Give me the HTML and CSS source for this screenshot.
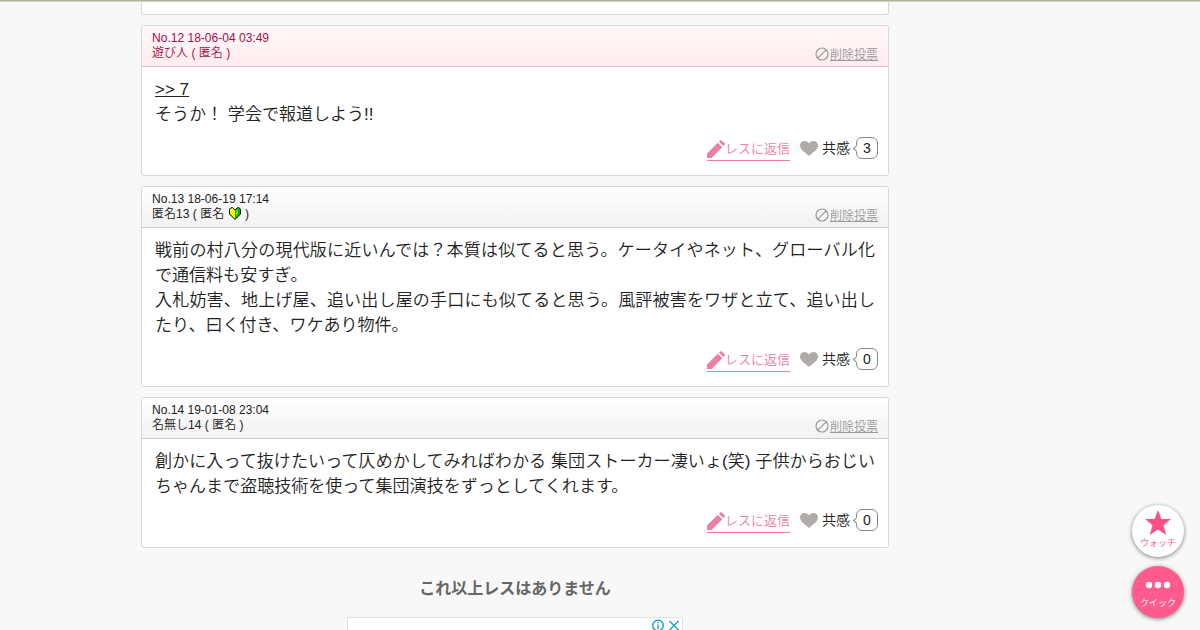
FILE: index.html
```html
<!DOCTYPE html>
<html lang="ja">
<head>
<meta charset="utf-8">
<title>スレッド</title>
<link rel="stylesheet" href="styles.css">
</head>
<body>
<svg class="defs" width="0" height="0" aria-hidden="true">
  <symbol id="ban" viewBox="0 0 14 14"><circle cx="7" cy="7" r="6" fill="none" stroke="currentColor" stroke-width="1.2"/><path d="M2.8 11.2 11.2 2.8" stroke="currentColor" stroke-width="1.2"/></symbol>
  <symbol id="pencil" viewBox="0 0 18 18"><path d="M0 18V13.5L10.800 2.700l4.500 4.500L4.500 18zM12 1.700 13.300.400q.7-.6 1.400 0l2.900 2.900q.6.7 0 1.400l-1.300 1.300z" fill="currentColor"/></symbol>
  <symbol id="heart" viewBox="0 0 18 15"><path d="M9 15C7.5 13.2 0 9.4 0 4.6 0 2 2 .1 4.5.1 6.5.1 8.2 1.2 9 2.5 9.800 1.200 11.5.1 13.500.1 16 .1 18 2 18 4.600 18 9.400 10.500 13.200 9 15z" fill="currentColor"/></symbol>
</svg>
<div class="topline"></div>
<main class="thread">
  <div class="post post-prev"></div>
  <article class="post">
    <header class="head owner">
      <div class="meta">No.12 18-06-04 03:49<br>遊び人 ( 匿名 )</div>
      <a class="vote"><svg><use href="#ban"/></svg><span>削除投票</span></a>
    </header>
    <div class="body"><span class="anchor">&gt;&gt; 7</span><br>そうか！ 学会で報道しよう!!</div>
    <footer class="actions">
      <a class="reply"><svg><use href="#pencil"/></svg><span>レスに返信</span></a>
      <svg class="heart"><use href="#heart"/></svg><span class="agree">共感</span><span class="count">3</span>
    </footer>
  </article>
  <article class="post">
    <header class="head">
      <div class="meta">No.13 18-06-19 17:14<br>匿名13 ( 匿名 <svg class="leaf" viewBox="0 0 12 13"><path d="M1.500 1.500 3.500.5 6 3 8.500.5 11.500 2V7L6 12.500.5 7V2z" fill="#11a51b"/><path d="M1 2 3.500 1 6 3.500V12L1 7z" fill="#ff0"/><path d="M7 4 9 2v5L7 9z" fill="#56e23b"/><path d="M6 3 3.500.5 1.500 1 .5 2.500V7L6 12.500 11.500 7V2.500L10.500 1 8.500.5z" fill="none" stroke="#111"/></svg> )</div>
      <a class="vote"><svg><use href="#ban"/></svg><span>削除投票</span></a>
    </header>
    <div class="body">戦前の村八分の現代版に近いんでは？本質は似てると思う。ケータイやネット、グローバル化で通信料も安すぎ。<br>入札妨害、地上げ屋、追い出し屋の手口にも似てると思う。風評被害をワザと立て、追い出したり、曰く付き、ワケあり物件。</div>
    <footer class="actions">
      <a class="reply"><svg><use href="#pencil"/></svg><span>レスに返信</span></a>
      <svg class="heart"><use href="#heart"/></svg><span class="agree">共感</span><span class="count">0</span>
    </footer>
  </article>
  <article class="post">
    <header class="head">
      <div class="meta">No.14 19-01-08 23:04<br>名無し14 ( 匿名 )</div>
      <a class="vote"><svg><use href="#ban"/></svg><span>削除投票</span></a>
    </header>
    <div class="body">創かに入って抜けたいって仄めかしてみればわかる 集団ストーカー凄いょ(笑) 子供からおじいちゃんまで盗聴技術を使って集団演技をずっとしてくれます。</div>
    <footer class="actions">
      <a class="reply"><svg><use href="#pencil"/></svg><span>レスに返信</span></a>
      <svg class="heart"><use href="#heart"/></svg><span class="agree">共感</span><span class="count">0</span>
    </footer>
  </article>
  <p class="end">これ以上レスはありません</p>
  <div class="ad"><svg width="30" height="11" viewBox="0 0 30 11" fill="none" stroke="#16a5ba" stroke-width="1.4"><circle cx="7" cy="6.500" r="5.300"/><path d="M7 5.500v4.500M7 3v1.300M18.500 2l9 9m0-9-9 9"/></svg></div>
</main>
<nav class="float">
  <a class="round watch"><svg width="26" height="25" viewBox="0 0 26 25"><path d="M13 0 16.400 9H26L18.500 15.300 21.200 25 13 19.400 4.800 25 7.500 15.300 0 9H9.600z" fill="#ff4f87"/></svg><span>ウォッチ</span></a>
  <a class="round quick"><svg width="26" height="25" viewBox="0 0 26 25" fill="#fff"><circle cx="4" cy="14" r="3.200"/><circle cx="13" cy="14" r="3.200"/><circle cx="22" cy="14" r="3.200"/></svg><span>クイック</span></a>
</nav>
</body>
</html>
```

FILE: styles.css
```css
* { box-sizing: border-box; }
html { height: 630px; overflow: hidden; }
body {
  margin: 0;
  height: 630px;
  overflow: hidden;
  background: #f8f8f8;
  color: #222;
  font-family: "Liberation Sans", "Noto Sans CJK JP", sans-serif;
  font-weight: 350;
}
.defs { position: absolute; }
.topline { height: 2px; background: #b3b3a1; border-bottom: 1px solid #d0d0c5; }
.thread { width: 748px; height: 628px; margin-left: 141px; overflow: hidden; }
.post {
  margin-bottom: 10px;
  border: 1px solid #d8d8d8;
  border-radius: 3px;
  background: #fff;
  overflow: hidden;
}
.post-prev { height: 13px; border-top: 0; border-radius: 0 0 3px 3px; }
.head {
  display: flex;
  justify-content: space-between;
  height: 41px;
  padding: 5px 10px 0;
  border-bottom: 1px solid #ccc;
  background: linear-gradient(#fff, #f2f2f2);
  font-size: 12.04px;
  line-height: 15px;
}
.owner { background: linear-gradient(#fff8f8, #ffecef); border-color: #dcc4ca; color: #a0114a; }
.leaf { width: 12px; height: 13px; vertical-align: -2px; margin: 0 1px; }
.vote { display: flex; align-items: center; height: 16px; margin-top: 15px; gap: 1px; color: #999; font-size: 12px; }
.vote svg { width: 14px; height: 14px; }
.vote span { text-decoration: underline; padding-top: 2px; }
.body { width: 733px; padding: 10px 0 0 13px; font-size: 17.05px; line-height: 25px; text-align: justify; }
.anchor { text-decoration: underline; }
.actions {
  display: flex;
  align-items: center;
  justify-content: flex-end;
  height: 48px;
  padding: 0 10px 6px 0;
  font-size: 14px;
}
.reply {
  display: flex;
  align-items: center;
  height: 23px;
  margin: 3px 10px 0 0;
  border-bottom: 1px solid #ed7ea5;
  color: #ed7ea5;
  font-size: 13px;
}
.reply svg { width: 18px; height: 18px; }
.reply span { padding-bottom: 3px; }
.heart { width: 18px; height: 15px; margin-right: 4px; color: #b0aaa9; }
.agree { margin-right: 6px; line-height: 22px; }
.count {
  position: relative;
  width: 22px;
  height: 22px;
  border: 1px solid #888;
  border-radius: 6px;
  line-height: 20px;
  text-align: center;
}
.count::before {
  content: "";
  position: absolute;
  left: -3px;
  top: 8px;
  width: 4px;
  height: 4px;
  border: solid #888;
  border-width: 0 0 1px 1px;
  background: #fff;
  transform: rotate(45deg);
}
.end { margin: 31px 0 0; height: 38px; color: #666; font-size: 16px; font-weight: bold; line-height: 20px; text-align: center; }
.ad { display: flex; justify-content: flex-end; width: 336px; height: 13px; margin: 0 auto; padding: 1px 1px 0 0; border: 1px solid #e2e2e2; border-bottom: 0; background: #fff; }
.float { position: absolute; left: 1132px; top: 505px; display: grid; gap: 9px; }
.round {
  display: flex;
  flex-direction: column;
  align-items: center;
  width: 52px;
  height: 52px;
  padding-top: 5px;
  border-radius: 50%;
  box-shadow: 0 1px 4px rgba(0, 0, 0, .5);
  background: #fff;
  color: #ff4f87;
  font-size: 9px;
  line-height: 17px;
}
.quick { background: #ff5c8d; color: #fff; line-height: 14px; }
```
